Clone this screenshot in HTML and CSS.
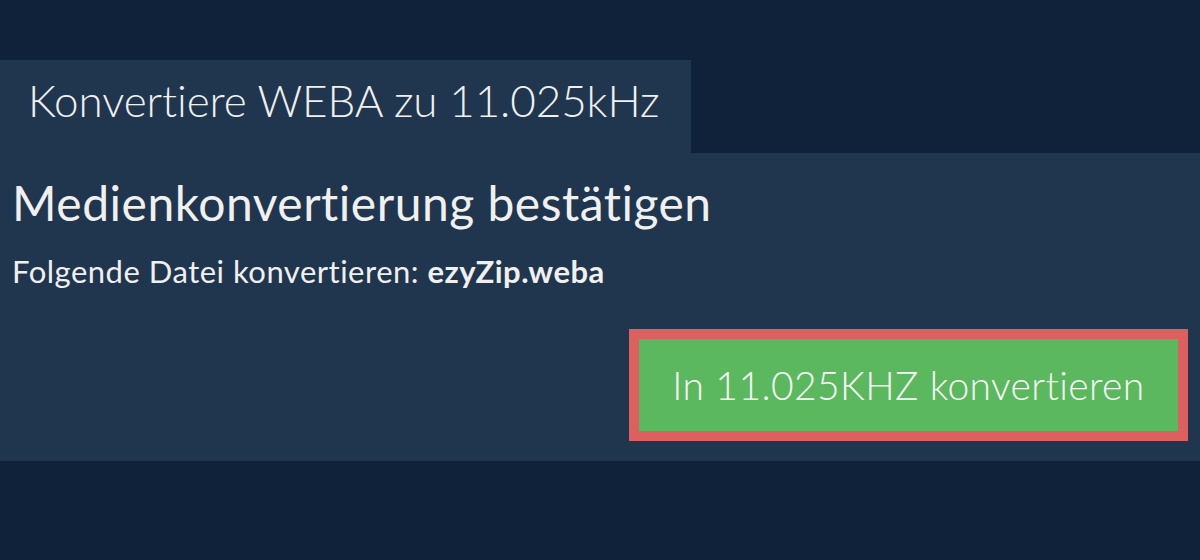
FILE: index.html
```html
<!DOCTYPE html>
<html lang="de">
<head>
<meta charset="utf-8">
<title>Konvertiere WEBA zu 11.025kHz</title>
<link rel="stylesheet" href="styles.css">
</head>
<body>
<main class="page">
  <div class="tab">Konvertiere WEBA zu 11.025kHz</div>
  <section class="panel">
    <h1 class="heading">Medienkonvertierung bestätigen</h1>
    <p class="info">Folgende Datei konvertieren: <strong>ezyZip.weba</strong></p>
    <div class="actions">
      <button class="convert">In 11.025KHZ konvertieren</button>
    </div>
  </section>
</main>
</body>
</html>
```

FILE: styles.css
```css
html, body {
  margin: 0;
  padding: 0;
  background: #10223a;
  font-family: Lato, "Open Sans", sans-serif;
  color: #f0f0f0;
}
.page {
  padding-top: 60px;
}
.tab {
  display: inline-block;
  vertical-align: top;
  box-sizing: border-box;
  width: 691px;
  height: 93px;
  padding: 0 28px;
  line-height: 80px;
  background: #20364f;
  font-size: 44px;
  font-weight: 300;
  letter-spacing: -0.1px;
  white-space: nowrap;
}
.panel {
  background: #20364f;
  padding: 20px 12px 20px 12px;
  display: flex;
  flex-direction: column;
}
.heading {
  margin: 0;
  font-size: 48px;
  font-weight: 400;
  line-height: 60px;
  letter-spacing: 0.5px;
}
.info {
  margin: 18px 0 0 0;
  font-size: 31px;
  line-height: 40px;
  letter-spacing: 0.5px;
}
.info strong {
  font-weight: 700;
}
.actions {
  display: flex;
  justify-content: flex-end;
  margin-top: 38px;
}
.convert {
  box-sizing: border-box;
  width: 559px;
  height: 112px;
  border: 10px solid #dc605f;
  background: #5cb85f;
  color: #f8f8f8;
  font-family: Lato, "Open Sans", sans-serif;
  font-size: 39px;
  font-weight: 300;
  letter-spacing: 0.4px;
  padding: 0;
}
```
